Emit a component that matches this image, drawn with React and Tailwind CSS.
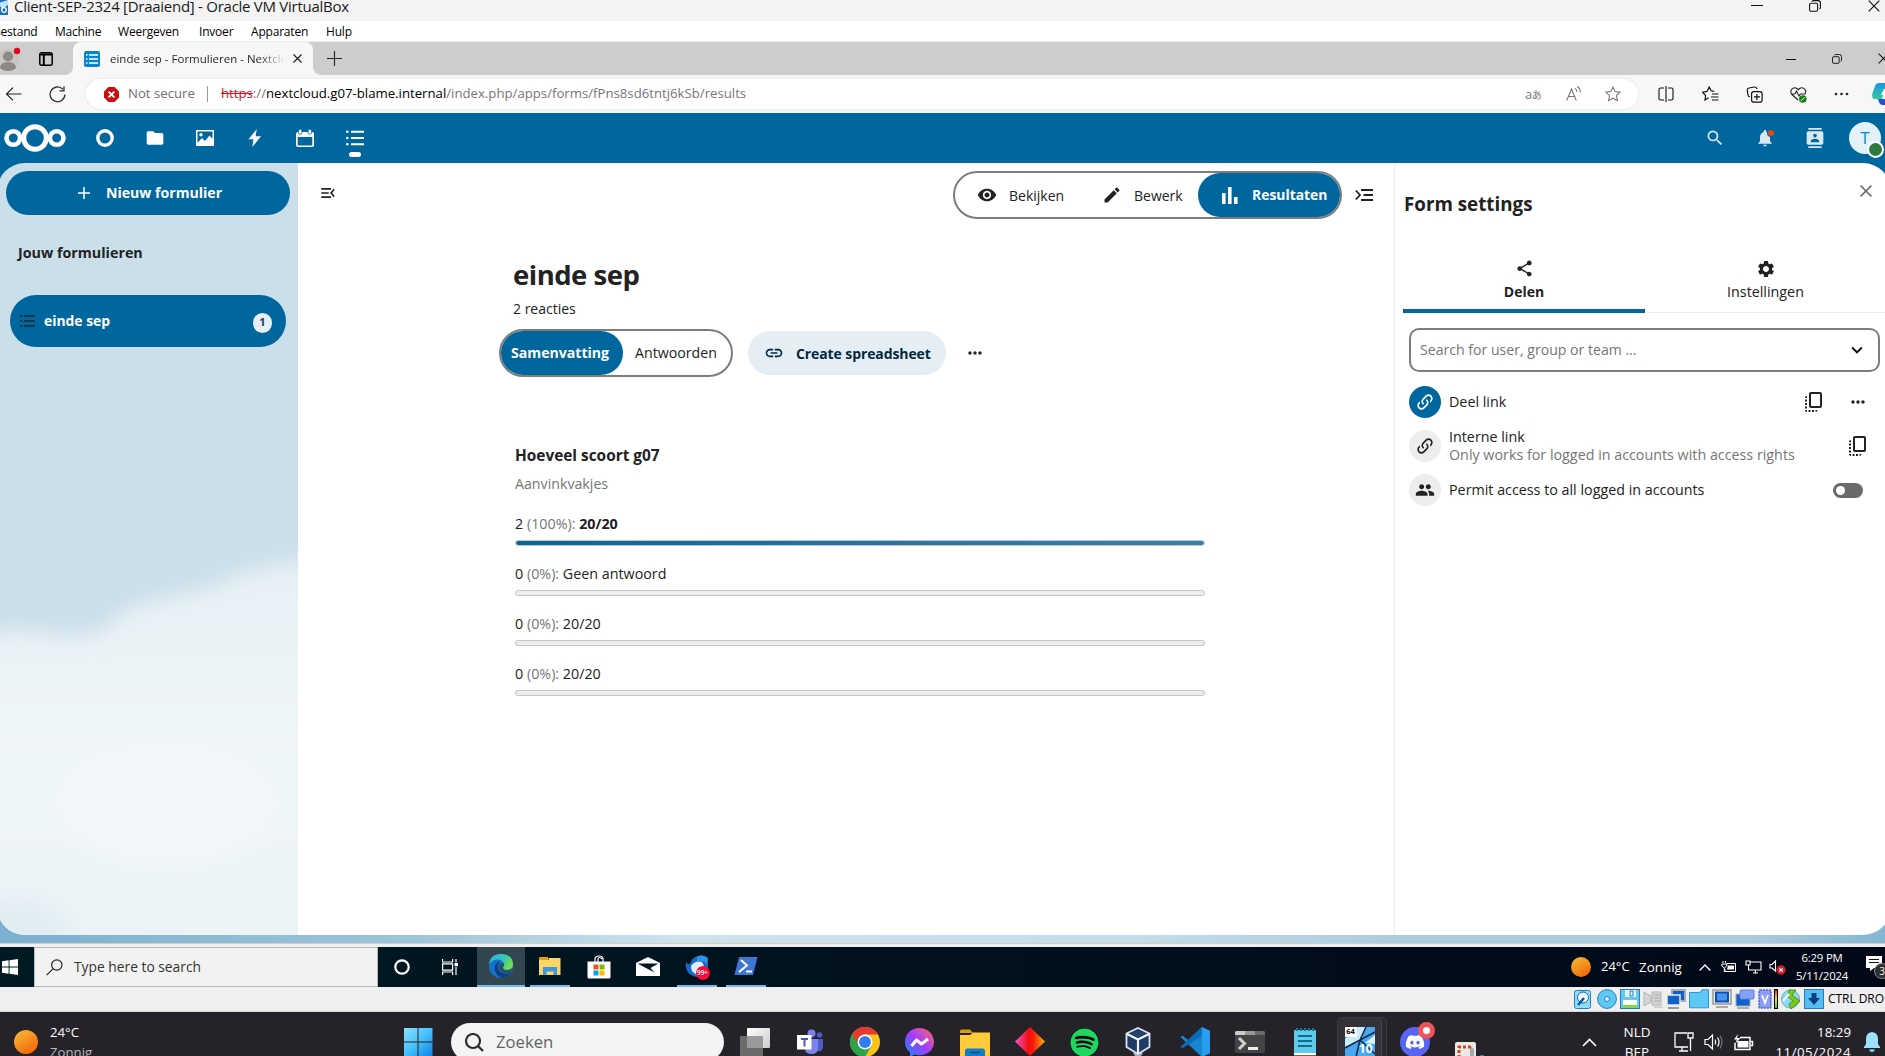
import React from "react";
import {
  MdVisibility, MdEdit, MdSettings, MdShare, MdMenuOpen, MdLink, MdMoreHoriz, MdGroup, MdExpandMore,
  MdSearch, MdCopyAll, MdNotifications, MdContacts, MdFolder,
} from "react-icons/md";
import { FaDiscord, FaSpotify } from "react-icons/fa";

const BLUE = "#00679e";

function Svg({ w = 24, h, box, children, className = "" }) {
  return (
    <svg width={w} height={h || w} viewBox={box || `0 0 ${w} ${h || w}`} fill="none" className={`shrink-0 ${className}`}>
      {children}
    </svg>
  );
}

function Minimize() {
  return <Svg w={12}><path d="M0 5.5h12" stroke="#111" /></Svg>;
}
function Restore({ w = 12 }) {
  return (
    <Svg w={w} box="0 0 12 12">
      <rect x=".6" y="3.2" width="8" height="8" rx="1.4" stroke="#111" strokeWidth="1.1" />
      <path d="M3 1.6Q3.4.6 4.6.6H9q2.4 0 2.4 2.4v4.4q0 1.2-1 1.6" stroke="#111" strokeWidth="1.1" />
    </Svg>
  );
}
function Cross({ w = 12 }) {
  return <Svg w={w} box="0 0 12 12"><path d="M.7.7l10.6 10.6M11.3.7L.7 11.3" stroke="#111" strokeWidth="1.2" /></Svg>;
}

function TitleBar() {
  return (
    <div className="flex h-[21px] items-start bg-[#f3f3f3]">
      <Svg w={8} h={16}>
        <rect x="-8" y="-2" width="16" height="17" fill="#1c6fc0" />
        <path d="M-2 3L8 0v5L2 9z" fill="#bfe3fa" />
        <circle cx="4" cy="10" r="2.3" stroke="#fff" strokeWidth="1.3" />
      </Svg>
      <span className="-mt-[4px] ml-[6px] w-[1730px] text-[15px] leading-[21px] tracking-[-0.27px] text-[#1a1a1a]">
        Client-SEP-2324 [Draaiend] - Oracle VM VirtualBox
      </span>
      <span className="ml-[7px] flex w-[58px]"><Minimize /></span>
      <span className="flex w-[59px]"><Restore w={12} /></span>
      <Cross w={12} />
    </div>
  );
}

function MenuBar() {
  return (
    <div className="flex h-[21px] items-center border-b border-[#ececec] bg-white pt-[2px] text-[12px] tracking-[-0.2px] text-black">
      <span className="-ml-[7px] w-[62px]">Bestand</span>
      <span className="w-[63px]">Machine</span>
      <span className="w-[81px]">Weergeven</span>
      <span className="w-[52px]">Invoer</span>
      <span className="w-[75px]">Apparaten</span>
      <span>Hulp</span>
    </div>
  );
}

function TabStrip() {
  return (
    <div className="flex h-[33px] items-stretch bg-[#cdcdcd]">
      <div className="w-[73px] shrink-0 bg-[#f7f7f7]">
        <div className="flex h-full items-center rounded-br-[8px] bg-[#cdcdcd]">
          <Svg w={22} h={26} className="mr-[17px]">
            <circle cx="8" cy="14" r="11" fill="#c9c6c2" />
            <circle cx="8" cy="10.500" r="5" fill="#8b8886" />
            <path d="M0 22q0-6 8-6t8 6q-3 3-8 3t-8-3z" fill="#8b8886" />
            <circle cx="17" cy="5" r="3.200" fill="#e00b1c" />
          </Svg>
          <Svg w={14}>
            <rect x=".8" y=".8" width="12.400" height="12.400" rx="2" stroke="#000" strokeWidth="1.500" />
            <path d="M1 2.500h12M4.800 3v10" stroke="#000" strokeWidth="2" />
          </Svg>
        </div>
      </div>
      <div className="flex w-[240px] shrink-0 items-center rounded-t-[8px] bg-[#f7f7f7]">
        <Svg w={16} className="ml-[11px]">
          <rect width="16" height="16" rx="2" fill="#0a84cc" />
          <path d="M2 4h1.500M5 4h9M2 8h1.500M5 8h9M2 12h1.500M5 12h9" stroke="#fff" strokeWidth="1.600" />
        </Svg>
        <div className="ml-[10px] w-[175px] overflow-hidden whitespace-nowrap bg-gradient-to-r from-[#222] from-85% to-transparent bg-clip-text text-[11.5px] text-transparent">
          einde sep - Formulieren - Nextcloud
        </div>
        <Svg w={9} className="ml-[8px]"><path d="M.5.5l8 8M8.500.5l-8 8" stroke="#222" strokeWidth="1.200" /></Svg>
      </div>
      <div className="w-[1470px] shrink-0 bg-[#f7f7f7]">
        <div className="flex h-full items-center rounded-bl-[8px] bg-[#cdcdcd] pl-[14px]">
          <Svg w={15}><path d="M7.500 0v15M0 7.500h15" stroke="#222" strokeWidth="1.100" /></Svg>
        </div>
      </div>
      <div className="ml-[3px] flex shrink-0 items-center">
        <span className="w-[46px]"><Svg w={10}><path d="M0 5.500h10" stroke="#111" /></Svg></span>
        <span className="w-[46px]"><Restore w={10} /></span>
        <Cross w={11} />
      </div>
    </div>
  );
}

function AddressBar() {
  return (
    <div className="flex h-[38px] items-center bg-[#f7f7f7]">
      <Svg w={17} h={14} className="ml-[5px]"><path d="M16.500 7H1.500M8 .6L1.500 7 8 13.400" stroke="#222" strokeWidth="1.200" /></Svg>
      <Svg w={17} className="ml-[27px]">
        <path d="M15.900 8.500a7.400 7.400 0 1 1-2-5.200M15 .3v4.500h-4.600" stroke="#333" strokeWidth="1.300" />
      </Svg>
      <div className="ml-[20px] flex h-[30px] w-[1552px] shrink-0 items-center rounded-full bg-white text-[13.2px] shadow-[0_0_3px_rgba(0,0,0,0.10)]">
        <Svg w={15} className="ml-[18px]">
          <path d="M4.400 0h6.200L15 4.400v6.200L10.600 15H4.400L0 10.600V4.400z" fill="#cb0e12" />
          <path d="M4.600 4.600l5.800 5.800M10.400 4.600l-5.800 5.800" stroke="#fff" strokeWidth="1.900" />
        </Svg>
        <span className="ml-[9px] w-[79px] shrink-0 text-[#6d6d6d]">Not secure</span>
        <span className="h-[16px] w-px bg-[#999]" />
        <span className="ml-[13px] w-[1304px] shrink-0 whitespace-nowrap text-[#767676]">
          <span className="text-[#c9151b] line-through">https</span>://<span className="text-black">nextcloud.g07-blame.internal</span>/index.php/apps/forms/fPns8sd6tntj6kSb/results
        </span>
        <span className="w-[41px] shrink-0 font-['Open_Sans','Noto_Sans_CJK_JP',sans-serif] text-[13px] leading-none tracking-[-0.5px] text-[#777]">
          a<span className="text-[10px]">あ</span>
        </span>
        <Svg w={16} className="mr-[23px]">
          <path d="M.7 14.500L5.500 3l4.800 11.500M2.300 10.500h6.400M9 2.500q2 1.200 2 3.500M11 .6q3.500 1.800 3.300 5.600" stroke="#777" strokeWidth="1.100" />
        </Svg>
        <Svg w={16} box="0 0 24 24"><path d="M12 1.500l3.200 6.900 7.500.9-5.500 5.200 1.400 7.500L12 18.300 5.400 22l1.400-7.500L1.300 9.300l7.500-.9z" stroke="#777" strokeWidth="1.600" /></Svg>
      </div>
      <div className="ml-[20px] flex shrink-0 items-center">
        <span className="w-[44px]"><Svg w={16}><path d="M6 2H2.500Q1 2 1 3.500v9Q1 14 2.500 14H6M10 2h3.500Q15 2 15 3.500v9q0 1.500-1.500 1.500H10M8 0v16" stroke="#111" strokeWidth="1.100" /></Svg></span>
        <span className="w-[44px]"><Svg w={17} h={16}><path d="M6.500 11.800L3 14l.6-4.500L.6 6.200 5 5.400 7.200 1l2 3.800 3 .6M10 8h6.500M9 11h7.500M10 14h6.500" stroke="#111" strokeWidth="1.200" /></Svg></span>
        <span className="w-[44px]"><Svg w={17} h={17}><path d="M11 3Q10.600.8 8.500 1L3 2Q1 2.500 1.200 4.400L2 9q.3 1.700 2 2" stroke="#111" strokeWidth="1.200" /><rect x="5.600" y="5.600" width="10.500" height="10.500" rx="2.200" stroke="#111" strokeWidth="1.200" /><path d="M10.900 8v6M8 10.900h6" stroke="#111" strokeWidth="1.200" /></Svg></span>
        <span className="w-[44px]"><Svg w={17} h={17}><path d="M8 14L2 8.500Q0 6 1.500 3.500 4 .5 7 2.500l1.300 1.200L9.600 2.500q3-2 5.400 1 1.500 2 0 4.500M1 8h4l1.500-3 2.500 5 1.500-2h5" stroke="#222" strokeWidth="1.100" /><circle cx="12.800" cy="13" r="3.800" fill="#1b7d1b" /><path d="M11 14.800l3.500-3.500" stroke="#fff" /></Svg></span>
        <span className="w-[38px]"><Svg w={15} h={4}><circle cx="2" cy="2" r="1.300" fill="#222" /><circle cx="7.500" cy="2" r="1.300" fill="#222" /><circle cx="13" cy="2" r="1.300" fill="#222" /></Svg></span>
        <Svg w={13} h={22}>
          <defs><linearGradient id="cop" x1="0" y1="0" x2="0" y2="1"><stop stopColor="#1597e8" /><stop offset="1" stopColor="#38c99a" /></linearGradient></defs>
          <path d="M7 0h6v5L10 16H3Q-1 16 .5 10L3 3Q4 0 7 0z" fill="url(#cop)" />
          <path d="M6 16h7v6h-3q-2 0-3-3z" fill="#2350cf" />
          <path d="M9 12l3-6 1 0v6z" fill="#fff" />
        </Svg>
      </div>
    </div>
  );
}

function CloudHeader() {
  const cell = "flex w-[50px] shrink-0 items-center justify-center text-white";
  return (
    <div className="flex h-[50px] items-center bg-[#00679e]">
      <div className="w-[80px] shrink-0 pl-[4px]">
        <Svg w={62} h={28}>
          <circle cx="31" cy="14" r="11.300" stroke="#fff" strokeWidth="5" />
          <circle cx="9.300" cy="14" r="6.800" stroke="#fff" strokeWidth="4.600" />
          <circle cx="52.700" cy="14" r="6.800" stroke="#fff" strokeWidth="4.600" />
        </Svg>
      </div>
      <div className={cell}><Svg w={18}><circle cx="9" cy="9" r="7.200" stroke="#fff" strokeWidth="3.400" /></Svg></div>
      <div className={cell}><MdFolder size={20} /></div>
      <div className={cell}>
        <Svg w={18} h={16}><path fillRule="evenodd" d="M0 0h18v16H0zM1.500 1.500v11.200L6 8l3 3 4.500-5.500 3 3.300V1.500z" fill="#fff" /><circle cx="5" cy="4.700" r="1.700" fill="#fff" /></Svg>
      </div>
      <div className={cell}><Svg w={14} h={18}><path d="M8.800 0L.5 10.300h5L4.300 18 13 7.300H7.600z" fill="#fff" /></Svg></div>
      <div className={cell}>
        <Svg w={18} h={18}><path fillRule="evenodd" d="M2 3h14q2 0 2 2v11q0 2-2 2H2q-2 0-2-2V5q0-2 2-2zm-.3 5v7.500q0 .9.900.9h12.800q.9 0 .9-.9V8z" fill="#fff" /><rect x="2.500" y=".3" width="3.400" height="5" rx="1.500" fill="#fff" stroke={BLUE} strokeWidth=".8" /><rect x="12.100" y=".3" width="3.400" height="5" rx="1.500" fill="#fff" stroke={BLUE} strokeWidth=".8" /></Svg>
      </div>
      <div className="flex h-full w-[50px] flex-col items-center pt-[17px]">
        <Svg w={18} h={16}>
          <path d="M5 1.800h13M5 8h13M5 14.200h13" stroke="#fff" strokeWidth="1.900" />
          <circle cx="1.300" cy="1.800" r="1.300" fill="#fff" /><circle cx="1.300" cy="8" r="1.300" fill="#fff" /><circle cx="1.300" cy="14.200" r="1.300" fill="#fff" />
        </Svg>
        <span className="mt-[6px] h-[5px] w-[12px] rounded-full bg-white" />
      </div>
      <div className="ml-auto flex w-[195px] shrink-0 items-center">
        <div className="flex w-[50px] justify-center text-[#d9e8f0]"><MdSearch size={20} /></div>
        <div className="relative flex w-[50px] justify-center text-[#d9e8f0]">
          <MdNotifications size={20} />
          <span className="absolute right-[16px] top-[2px] size-[6px] rounded-full bg-[#dc4a18] ring-1 ring-[#00679e]" />
        </div>
        <div className="flex w-[50px] justify-center text-[#d9e8f0]"><MdContacts size={20} /></div>
        <div className="relative ml-[9px] flex size-[32px] shrink-0 items-center justify-center rounded-full bg-[#e3f1f9] text-[17px] text-[#0c8bd2]">
          T
          <span className="absolute -bottom-[4px] -right-[3px] size-[17px] rounded-full border-[2px] border-white bg-[#2d7b41]" />
        </div>
      </div>
    </div>
  );
}

function Sidebar() {
  return (
    <div className="relative flex w-[301px] shrink-0 flex-col bg-[#cbdfea] pl-[3px]">
      <svg className="absolute inset-0" width="301" height="772" viewBox="0 0 301 772">
        <defs>
          <filter id="soft" x="-30%" y="-30%" width="160%" height="160%"><feGaussianBlur stdDeviation="10" /></filter>
          <linearGradient id="cloud" x1="0" y1="0" x2="0" y2="1">
            <stop offset="0" stopColor="#e6f0f5" /><stop offset=".4" stopColor="#eff5f8" /><stop offset="1" stopColor="#ebf3f7" />
          </linearGradient>
        </defs>
        <path d="M-40 478Q10 462 60 472 105 480 128 447 175 432 215 425 255 398 350 395V830H-40z" fill="url(#cloud)" filter="url(#soft)" />
        <ellipse cx="170" cy="640" rx="110" ry="60" fill="#f3f7fa" filter="url(#soft)" />
        <ellipse cx="15" cy="765" rx="60" ry="30" fill="#e2edf3" filter="url(#soft)" />
      </svg>
      <div className="relative">
        <div className="ml-[6px] mt-[8px] flex h-[44px] w-[284px] items-center rounded-full bg-[#00679e] text-white">
          <Svg w={12} className="ml-[72px]"><path d="M6 0v12M0 6h12" stroke="#fff" strokeWidth="1.500" /></Svg>
          <span className="ml-[16px] text-[14.1px] font-bold">Nieuw formulier</span>
        </div>
        <div className="ml-[18px] mt-[27px] text-[14.300px] font-bold leading-[22px] text-[#222]">Jouw formulieren</div>
        <div className="ml-[10px] mt-[31px] flex h-[52px] w-[276px] items-center rounded-full bg-[#00679e] text-white">
          <Svg w={15} h={12} className="ml-[10px] -mt-[1px]">
            <path d="M4 1.200h11M4 6h11M4 10.800h11M0 1.200h2.300M0 6h2.300M0 10.800h2.300" stroke="#1b2d3a" strokeWidth="1.700" />
          </Svg>
          <span className="ml-[9px] text-[13.900px] font-bold">einde sep</span>
          <span className="ml-auto mr-[14px] mt-[3px] flex h-[20px] w-[19px] items-center justify-center rounded-full bg-[#e5eff5] text-[11px] font-bold text-[#15405a]">1</span>
        </div>
      </div>
    </div>
  );
}

const results = [
  { count: 2, pct: 100, label: "20/20", top: true },
  { count: 0, pct: 0, label: "Geen antwoord" },
  { count: 0, pct: 0, label: "20/20" },
  { count: 0, pct: 0, label: "20/20" },
];

function Main() {
  return (
    <div className="flex w-[1096px] shrink-0 flex-col bg-white text-[#222]">
      <div className="flex h-[64px] items-start">
        <MdMenuOpen size={20} className="ml-[20px] mt-[20px] scale-x-90" />
        <div className="ml-[615px] mt-[8px] flex h-[48px] w-[389px] items-center rounded-full border-2 border-[#7d7d7d] text-[14px]">
          <MdVisibility size={20} className="ml-[22px]" />
          <span className="ml-[12px] w-[93px]">Bekijken</span>
          <MdEdit size={20} />
          <span className="ml-[12px] w-[64px]">Bewerk</span>
          <div className="flex h-[44px] flex-1 items-center rounded-full bg-[#00679e] font-bold text-white">
            <Svg w={16} h={17} className="ml-[24px]"><path d="M0 6h3.600v11H0zM6 0h3.600v17H6zM12 10h3.600v7H12z" fill="#fff" /></Svg>
            <span className="ml-[14px] text-[13.900px]">Resultaten</span>
          </div>
        </div>
        <Svg w={18} h={12} className="ml-[13px] mt-[26px]">
          <path d="M6 1h12M8.500 6H18M6 11h12" stroke="#222" strokeWidth="2" /><path d="M.8 1.500L5 6 .8 10.500" stroke="#222" strokeWidth="1.800" />
        </Svg>
      </div>
      <h1 className="ml-[215px] mt-[28px] text-[27.500px] font-bold leading-[40px] tracking-[-0.5px]">einde sep</h1>
      <div className="ml-[215px] mt-[3px] text-[14px] leading-[22px]">2 reacties</div>
      <div className="ml-[201px] mt-[9px] flex items-center">
        <div className="flex h-[48px] w-[234px] items-center rounded-full border-2 border-[#7d7d7d] text-[14px]">
          <div className="flex h-[44px] w-[122px] items-center justify-center rounded-full bg-[#00679e] pr-[4px] text-[14.200px] font-bold tracking-[-0.05px] text-white">Samenvatting</div>
          <span className="ml-[12px] text-[14.200px]">Antwoorden</span>
        </div>
        <div className="ml-[15px] flex h-[44px] w-[198px] items-center rounded-full bg-[#e5eef5] text-[#00293f]">
          <MdLink size={20} className="ml-[16px]" />
          <span className="ml-[12px] whitespace-nowrap text-[14px] font-bold tracking-[-0.1px]">Create spreadsheet</span>
        </div>
        <MdMoreHoriz size={20} className="ml-[19px]" />
      </div>
      <div className="ml-[217px] mt-[67px] text-[15.400px] font-bold leading-[24px]">Hoeveel scoort g07</div>
      <div className="ml-[217px] mt-[5px] text-[14.200px] leading-[22px] text-[#767676]">Aanvinkvakjes</div>
      <div className="ml-[217px] mt-[18px] flex w-[690px] flex-col text-[14.300px]">
        {results.map((r, i) => (
          <div key={i} className="h-[50px]">
            <div className="leading-[22px]">
              {r.count} <span className="text-[#767676]">({r.pct}%):</span>{" "}
              <span className={r.top ? "font-bold" : ""}>{r.label}</span>
            </div>
            <div className="mt-[5px] h-[6px] w-[690px] overflow-hidden rounded-[3px] border border-[#c6c6c6] bg-[#ededed]">
              <div className="h-full rounded-[2px] bg-gradient-to-r from-[#00679e] to-[#3480b4]" style={{ width: `${r.pct}%` }} />
            </div>
          </div>
        ))}
      </div>
    </div>
  );
}

function LinkVariant() {
  return (
    <svg width="20" height="20" viewBox="0 0 24 24" fill="currentColor">
      <path d="M10.59,13.41C11,13.8 11,14.44 10.59,14.83C10.2,15.22 9.56,15.22 9.17,14.83C7.22,12.88 7.22,9.71 9.17,7.76V7.76L12.71,4.22C14.66,2.27 17.83,2.27 19.78,4.22C21.73,6.17 21.73,9.34 19.78,11.29L18.29,12.78C18.3,11.96 18.17,11.14 17.89,10.36L18.36,9.88C19.54,8.71 19.54,6.81 18.36,5.64C17.19,4.46 15.29,4.46 14.12,5.64L10.59,9.17C9.41,10.34 9.41,12.24 10.59,13.41M13.41,9.17C13.8,8.78 14.44,8.78 14.83,9.17C16.78,11.12 16.78,14.29 14.83,16.24V16.24L11.29,19.78C9.34,21.73 6.17,21.73 4.22,19.78C2.27,17.83 2.27,14.66 4.22,12.71L5.71,11.22C5.7,12.04 5.83,12.86 6.11,13.65L5.64,14.12C4.46,15.29 4.46,17.19 5.64,18.36C6.81,19.54 8.71,19.54 9.88,18.36L13.41,14.83C14.59,13.66 14.59,11.76 13.41,10.59C13,10.2 13,9.56 13.41,9.17Z" />
    </svg>
  );
}

function SettingsPanel() {
  const circle = "flex size-[32px] shrink-0 items-center justify-center rounded-full";
  return (
    <div className="flex w-[497px] shrink-0 flex-col border-l border-[#ededed] bg-white text-[14.300px] text-[#222]">
      <div className="flex h-[84px] items-start">
        <span className="ml-[9px] mt-[26px] w-[456px] text-[18.800px] font-bold leading-[30px]">Form settings</span>
        <Svg w={12} className="mt-[22px]"><path d="M.6.6l10.800 10.800M11.400.6L.6 11.400" stroke="#6b6b6b" strokeWidth="1.500" /></Svg>
      </div>
      <div className="ml-[8px] flex h-[66px] border-b border-[#ededed]">
        <div className="flex h-[66px] w-[242px] flex-col items-center border-b-4 border-[#00679e] pt-[12px] text-[14px] font-bold">
          <MdShare size={19} />
          <span className="mt-[4px] leading-[20px]">Delen</span>
        </div>
        <div className="flex w-[241px] flex-col items-center pt-[12px]">
          <MdSettings size={20} />
          <span className="mt-[3px] leading-[20px]">Instellingen</span>
        </div>
      </div>
      <div className="ml-[14px] mt-[15px] flex h-[44px] w-[471px] items-center rounded-[10px] border-2 border-[#7d7d7d] pl-[9px] text-[#767676]">
        <span className="text-[14.100px]">Search for user, group or team …</span>
        <MdExpandMore size={22} className="ml-auto mr-[10px] text-[#111]" />
      </div>
      <div className="ml-[14px] mt-[8px] flex h-[44px] items-center">
        <div className={`${circle} bg-[#00679e] text-white`}><LinkVariant /></div>
        <span className="ml-[8px] w-[353px]">Deel link</span>
        <MdCopyAll size={24} />
        <MdMoreHoriz size={20} className="ml-[22px]" />
      </div>
      <div className="ml-[14px] flex h-[44px] items-center">
        <div className={`${circle} bg-[#ededed]`}><LinkVariant /></div>
        <div className="ml-[8px] w-[397px] leading-[18px]">
          <div>Interne link</div>
          <div className="whitespace-nowrap text-[#767676]">Only works for logged in accounts with access rights</div>
        </div>
        <MdCopyAll size={24} />
      </div>
      <div className="ml-[14px] flex h-[44px] items-center">
        <div className={`${circle} bg-[#ededed]`}><MdGroup size={20} /></div>
        <span className="ml-[8px] w-[384px]">Permit access to all logged in accounts</span>
        <span className="flex h-[15px] w-[30px] items-center rounded-full bg-[#6b6b6b] pl-[3px]"><span className="size-[9px] rounded-full bg-white" /></span>
      </div>
    </div>
  );
}

function Sun({ w }) {
  return (
    <Svg w={w} box="0 0 24 24">
      <defs><linearGradient id="sun" x1="0" y1="0" x2=".6" y2="1"><stop stopColor="#f4c038" /><stop offset="1" stopColor="#f3690c" /></linearGradient></defs>
      <circle cx="12" cy="12" r="12" fill="url(#sun)" />
    </Svg>
  );
}

function GuestTaskbar() {
  const cell = "flex h-full w-[49px] shrink-0 items-center justify-center";
  return (
    <div className="flex h-[40px] items-center bg-gradient-to-r from-[#001a24] to-[#010817] text-white">
      <div className="w-[34px] shrink-0 pl-[2px]">
        <Svg w={16}><path d="M0 2.200L6.600 1.300V7.500H0zM7.500 1.200L16 0v7.500H7.500zM0 8.500h6.600v6.200L0 13.800zM7.500 8.500H16V16l-8.500-1.200z" fill="#fff" /></Svg>
      </div>
      <div className="flex h-full w-[344px] shrink-0 items-center border border-[#b9b9b9] bg-[#f2f2f2] text-[#333]">
        <Svg w={17} className="ml-[11px]"><circle cx="10.800" cy="6" r="5.200" stroke="#222" strokeWidth="1.200" /><path d="M7 9.800L.6 16.200" stroke="#222" strokeWidth="1.200" /></Svg>
        <span className="ml-[11px] text-[13.800px]">Type here to search</span>
      </div>
      <div className="flex w-[48px] shrink-0 justify-center"><Svg w={16}><circle cx="8" cy="8" r="6.700" stroke="#fff" strokeWidth="2.200" /></Svg></div>
      <div className="flex w-[51px] shrink-0 justify-center pr-[3px]">
        <Svg w={16} h={16}><path d="M.6 0v3h10V0M.6 16v-3h10v3M.6 4.800h10v6.400H.6zM14 0v3.500M14 8v8" stroke="#fff" strokeWidth="1.200" /><rect x="12.500" y="4" width="3.500" height="3.200" fill="#fff" /></Svg>
      </div>
      <div className="flex h-full w-[48px] shrink-0 items-center justify-center border-b-2 border-[#76b9ed] bg-[#334650]">
        <Svg w={24}>
          <defs>
            <linearGradient id="edgeT" x1="0" y1="0" x2="1" y2=".5"><stop stopColor="#2fb1ea" /><stop offset=".6" stopColor="#34c7b4" /><stop offset="1" stopColor="#6fe04f" /></linearGradient>
          </defs>
          <circle cx="12" cy="12" r="12" fill="#1473c9" />
          <path d="M0 11Q1 0 12 0q12 .5 12 10.500 0 5.500-6 5.500-4 0-4-2.500 1.500-1.500 1-4Q13 5 8 5.500 2 6 0 11z" fill="url(#edgeT)" />
          <path d="M8.500 13q0-3 3-5.500Q6 8 5.600 14q0 7 7.400 10 6-.5 9-5.500-4 2-8 .5-5-1.500-5.500-6z" fill="#0d3f85" />
          <path d="M15 9.500q1 2-1 4 0 2.500 4 2.500 4 0 5.500-2.500-1 4-1.700 5-3 1.300-7.800 0Q9 16 9.500 12 11 8 15 9.500z" fill="#334650" opacity=".75" />
        </Svg>
      </div>
      <div className={cell}>
        <div className="flex h-full w-[40px] items-center justify-center border-b-2 border-[#76b9ed]">
          <Svg w={22} h={18}><path d="M0 1Q0 0 1 0h8v3H0z" fill="#e8a200" /><path d="M0 3h9.500V1H21.500v17H0z" fill="#fdd566" /><path d="M4 10h14v8h-3.500v-3.500h-7V18H4z" fill="#3a99dd" /></Svg>
        </div>
      </div>
      <div className={cell}>
        <Svg w={24} h={24}><path d="M8 7V3.500Q8.500 1 12 1t4 2.500V7M11 7V4q1-3 4 0" stroke="#fff" strokeWidth="1.200" /><path d="M.5 6.500h23V22q0 1.500-1.500 1.500H2Q.5 23.500.5 22z" fill="#fff" /><path d="M6.500 9.500h5v5h-5z" fill="#f25022" /><path d="M12.500 9.500h5v5h-5z" fill="#7fba00" /><path d="M6.500 15.500h5v5h-5z" fill="#00a4ef" /><path d="M12.500 15.500h5v5h-5z" fill="#ffb900" /></Svg>
      </div>
      <div className={cell}>
        <Svg w={24} h={20}><path d="M0 6L12 0l12 6v13H0z" fill="#fff" /><path d="M1.500 6.500H22.500L14.500 11l4 4.500z" fill="#001822" /></Svg>
      </div>
      <div className={cell}>
        <div className="relative flex h-full w-[40px] items-center justify-center border-b-2 border-[#76b9ed]">
          <Svg w={24}><path d="M1 8q2 3 4 2Q7 2 17 1q7 3 6 12-2 10-12 10Q-1 20 1 8z" fill="#1769c4" /><path d="M6 12q4-6 11-4l3 6-6 7Q6 20 6 12z" fill="#dceefb" /><path d="M12 3q6-3 11 1l-1 6q-4-4-10-3z" fill="#2f93ee" /></Svg>
          <span className="absolute bottom-[5px] right-[7px] flex size-[14px] items-center justify-center rounded-full bg-[#fb0a3a] text-[6.500px] font-semibold">99+</span>
        </div>
      </div>
      <div className={cell}>
        <div className="flex h-full w-[40px] items-center justify-center border-b-2 border-[#76b9ed]">
          <Svg w={24} h={18}><path d="M5 0h18.500L19 18H.5z" fill="#3d75d2" /><path d="M7 3l6 5.500L5 15M12 14.500h6" stroke="#fff" strokeWidth="2" /></Svg>
        </div>
      </div>
      <div className="ml-auto flex h-full w-[314px] shrink-0 items-center">
        <Sun w={20} />
        <span className="ml-[10px] w-[38px] shrink-0 whitespace-nowrap text-[13px]">24°C</span>
        <span className="w-[60px] shrink-0 text-[13.400px]">Zonnig</span>
        <Svg w={12} h={7}><path d="M.6 6.500L6 1l5.400 5.500" stroke="#fff" strokeWidth="1.300" /></Svg>
        <Svg w={16} h={12} className="ml-[10px]"><path d="M5.500 2.500h9v8H4V8M2 0v2M4.500 0v2M.8 3h5v2L3.300 7 .8 5zM3.300 7v4" stroke="#fff" /><path d="M7 4.500h6v4H6z" fill="#fff" /></Svg>
        <Svg w={17} h={14} className="ml-[8px]"><path d="M5 2h11v8H3.500V5M1 1h4v4H1zM8 13h5M10.500 10v3" stroke="#fff" strokeWidth="1.100" /></Svg>
        <Svg w={17} h={15} className="ml-[7px]"><path d="M1 4.500h2L6.500 1v10L3 8H1z" stroke="#fff" strokeWidth="1.100" /><circle cx="12" cy="10" r="4.700" fill="#d5202b" /><path d="M10.300 8.300l3.400 3.400M13.700 8.300l-3.400 3.400" stroke="#fff" strokeWidth="1.200" /></Svg>
        <div className="ml-[8px] w-[56px] shrink-0 text-center text-[11.400px] leading-[18px] tracking-[-0.2px]">
          <div>6:29 PM</div>
          <div className="whitespace-nowrap">5/11/2024</div>
        </div>
        <div className="relative ml-[16px] h-[24px] w-[20px] shrink-0">
          <Svg w={17} h={17}><path d="M0 1h16v12H8l-4 3v-3H0z" fill="#fff" /><path d="M3 4.500h10M3 7.500h10" stroke="#07121f" strokeWidth="1.200" /></Svg>
          <span className="absolute left-[8px] top-[8px] flex size-[16px] items-center justify-center rounded-full border border-[#888] bg-[#2d2d2d] text-[10px]">3</span>
        </div>
      </div>
    </div>
  );
}

function StatusBar() {
  const outline = "#2a7cc0";
  const cell = "flex w-[23px] shrink-0";
  return (
    <div className="flex h-[25px] items-center border-b border-[#d8d8d8] bg-[#efefef]">
      <div className="ml-auto flex w-[311px] shrink-0 items-center">
        <div className={cell}><Svg w={17} h={19}><rect x=".5" y=".5" width="16" height="18" rx="2" fill="#8fdcf8" stroke={outline} /><circle cx="9" cy="7.500" r="5.500" fill="#eef9ff" stroke="#1563a8" /><path d="M10 8L4 15" stroke="#12559a" strokeWidth="2.500" /></Svg></div>
        <div className={cell}><Svg w={20}><circle cx="10" cy="10" r="9.400" fill="#5ccaf5" stroke={outline} /><circle cx="10" cy="10" r="2.500" fill="#e8f8ff" stroke={outline} /></Svg></div>
        <div className={cell}><Svg w={20}><rect x=".5" y=".5" width="19" height="19" fill="#62c9f3" stroke={outline} /><path d="M5 1h11v7H5z" fill="#dff4fd" /><path d="M10 2h3v5h-3z" stroke={outline} /><path d="M3 11h14v5H3z" fill="#fff" /><path d="M3 16h14v3H3z" fill="#7fdb37" /></Svg></div>
        <div className={cell}><Svg w={20}><path d="M1 3l7 4v6l-7 4zM9 3h9v13H9zM11 18h9" fill="#d5d5d5" stroke="#b5b5b5" /><path d="M11 6h6M11 9h6M11 12h6" stroke="#aaa" /></Svg></div>
        <div className={cell}><Svg w={20}><rect x="6" y="1" width="13" height="11" fill="#0d61cb" stroke="#aaa" strokeWidth="2" /><rect x="1" y="6" width="13" height="10" fill="#0d61cb" stroke="#e9e9e9" strokeWidth="1.500" /><path d="M2 19h11" stroke="#999" strokeWidth="2" /></Svg></div>
        <div className={cell}><Svg w={20}><path d="M.5 3.500H11L13 .8h6.500v18H.5z" fill="#5cc8f5" stroke="#3496cf" /></Svg></div>
        <div className={cell}><Svg w={20}><rect x="1" y="1" width="18" height="14" fill="#eee" stroke="#999" strokeWidth="1.500" /><rect x="4" y="3.500" width="12" height="9" fill="#4794ec" stroke="#0b50b5" strokeWidth="2" /><path d="M4 18h12" stroke="#aaa" strokeWidth="2" /></Svg></div>
        <div className={cell}><Svg w={20}><rect x="1" y="5" width="14" height="12" fill="#0d61cb" stroke="#aaa" /><rect x="5" y="1" width="14" height="9" rx="1" fill="#86a2f5" stroke="#5f7ed8" /><path d="M2 19h12" stroke="#999" strokeWidth="1.500" /></Svg></div>
        <div className="flex w-[16px] shrink-0"><Svg w={14} h={20}><rect x="1" y="1" width="12" height="18" rx="1" fill="#8b9df4" stroke="#5165cd" strokeWidth="1.500" strokeDasharray="2 1" /><path d="M4 6l3 8 3-8" stroke="#fff" strokeWidth="1.800" /></Svg></div>
        <span className="mr-[3px] h-[20px] w-[4px] shrink-0 border border-black bg-gradient-to-b from-red-600 via-yellow-300 to-green-500" />
        <div className={cell}><Svg w={20}><circle cx="9.500" cy="10" r="9" fill="#8ed8f5" stroke="#6daac6" /><path d="M8 1h7l-4 5 8 6-9 8-2-5 4-3-5-4z" fill="#78c81e" stroke="#4b9a10" /><path d="M2 12l6-7" stroke="#e9f8ff" strokeWidth="2.500" /></Svg></div>
        <div className="flex w-[24px] shrink-0"><Svg w={20}><rect x=".5" y=".5" width="19" height="19" fill="#55bdf2" stroke={outline} /><path d="M7.500 4h5v5H16l-6 7-6-7h3.500z" fill="#0b3f80" /></Svg></div>
        <span className="w-[57px] shrink-0 overflow-hidden whitespace-nowrap text-[12px] tracking-[-0.05px] text-black">CTRL DRO</span>
      </div>
    </div>
  );
}

function HostTaskbar() {
  const cell = "flex w-[55px] shrink-0 items-center justify-center";
  return (
    <div className="flex h-[60px] items-center bg-[#252229] text-white">
      <div className="flex w-[403px] shrink-0 items-center pl-[14px]">
        <Sun w={24} />
        <div className="ml-[12px] text-[13.200px] leading-[20px]">
          <div>24°C</div>
          <div className="text-[#b9b8ba]">Zonnig</div>
        </div>
      </div>
      <div className="w-[48px] shrink-0">
        <Svg w={30}>
          <defs><linearGradient id="win" x1="0" y1="0" x2="1" y2="1"><stop stopColor="#8fdfff" /><stop offset=".5" stopColor="#45c1fb" /><stop offset="1" stopColor="#0a84e8" /></linearGradient></defs>
          <path d="M1 1h13.500v13.500H1zM15.500 1H29.500v13.500h-14zM1 15.500h13.500V29H1zM15.500 15.500h14V29h-14z" fill="url(#win)" />
        </Svg>
      </div>
      <div className="flex h-[38px] w-[273px] shrink-0 items-center rounded-full bg-[#f3f3f3] text-[#636363]">
        <Svg w={19} className="ml-[14px]"><circle cx="8" cy="8" r="7" stroke="#2a2a2a" strokeWidth="2.100" /><path d="M13 13l5 5" stroke="#2a2a2a" strokeWidth="2.300" /></Svg>
        <span className="ml-[12px] text-[16.700px]">Zoeken</span>
      </div>
      <div className={`${cell} ml-[3px]`}>
        <Svg w={30}>
          <defs><linearGradient id="tv" x1="0" y1="0" x2="1" y2="1"><stop stopColor="#fff" /><stop offset="1" stopColor="#ccc" /></linearGradient></defs>
          <rect x="0" y="9" width="23" height="20" rx="1" fill="#6b6b6c" /><rect x="7" y="1" width="23" height="20" rx="1" fill="url(#tv)" /><path d="M7 9h16v12H7z" fill="#9a9a9b" />
        </Svg>
      </div>
      <div className={cell}>
        <Svg w={28} h={26}>
          <circle cx="15.500" cy="4.500" r="4" fill="#7b83eb" /><circle cx="23.500" cy="6" r="2.800" fill="#5059c9" />
          <path d="M18 10h9v8q0 5-6 4z" fill="#5059c9" /><path d="M9 10h13v9q0 6-6.500 6T9 20z" fill="#7b83eb" />
          <rect x="1" y="6" width="14.500" height="14.500" fill="#fff" /><path d="M5 10h7M8.500 10v7.500" stroke="#4b53bc" strokeWidth="2" />
        </Svg>
      </div>
      <div className={cell}>
        <Svg w={30} box="0 0 48 48">
          <circle cx="24" cy="24" r="24" fill="#fbc116" />
          <path d="M3.200 12A24 24 0 0 0 24 48l10.400-18L24 24V12z" fill="#2ba24c" />
          <path d="M3.200 12A24 24 0 0 1 44.800 12H24a12 12 0 0 0-10.400 18z" fill="#e33b2e" />
          <path d="M3.200 12A24 24 0 0 0 2 33l14 0-2.400-3z" fill="#2ba24c" />
          <circle cx="24" cy="24" r="12" fill="#fff" /><circle cx="24" cy="24" r="9.500" fill="#2f7df0" />
        </Svg>
      </div>
      <div className={cell}>
        <Svg w={29}>
          <defs><linearGradient id="msg" x1="1" y1="0" x2="0" y2="1"><stop stopColor="#ff6a63" /><stop offset=".5" stopColor="#a23bff" /><stop offset="1" stopColor="#0a8cff" /></linearGradient></defs>
          <path d="M14.500 0C6 0 0 6 0 14q0 6.500 5 10.500V29l4.500-2.500q2.500.8 5 .8C23 27.300 29 21.500 29 14S23 0 14.500 0z" fill="url(#msg)" />
          <path d="M6.500 18l5-6 5 4 6.500-5" stroke="#fff" strokeWidth="3" strokeLinejoin="round" />
        </Svg>
      </div>
      <div className={cell}>
        <Svg w={30} h={28}>
          <path d="M0 3q0-1.500 1.500-1.500H10L13 5H0z" fill="#dc9c05" /><path d="M0 7h10l3-2.500h17V28H0z" fill="#ffcb3a" />
          <path d="M5 28v-5q0-2.500 2.500-2.500h15Q25 20.500 25 23v5z" fill="#0f7cc8" /><path d="M10 24.500h10" stroke="#08508c" strokeWidth="1.500" />
        </Svg>
      </div>
      <div className={cell}>
        <Svg w={30}>
          <defs><linearGradient id="dia"><stop stopColor="#f257c5" /><stop offset=".45" stopColor="#f50d12" /><stop offset=".6" stopColor="#f51a0a" /><stop offset="1" stopColor="#f7b705" /></linearGradient></defs>
          <path d="M15 0l15 14.500L15 29 0 14.500z" fill="url(#dia)" />
        </Svg>
      </div>
      <div className={cell}><span className="flex rounded-full bg-black"><FaSpotify size={29} color="#1ed760" /></span></div>
      <div className={cell}>
        <Svg w={26} h={30} className="-ml-[4px]">
          <path d="M8 26q5-3 10 0l-2 3h-6z" fill="#9fabc4" />
          <path d="M13 1l11.500 5.500V20L13 27 1.500 20V6.500z" fill="#1f3c66" stroke="#dbe3ef" strokeWidth="1.800" />
          <path d="M2 7l11 5.500L24 7M13 12.500V27" stroke="#eef2f8" strokeWidth="2.200" />
          <path d="M6 7l7-3 7 3-7 3z" fill="#27436e" />
        </Svg>
      </div>
      <div className={cell}>
        <Svg w={30} box="0 0 24 24">
          <path d="M17.500 0L6.500 10.300 2.200 7 .3 8v0L17.500 24l1-7z" fill="#1586cf" />
          <path d="M2.200 17L.3 16 17.500 0v7L6.500 14z" fill="#0a6cb4" /><path d="M17.500 0L24 3v18l-6.500 3z" fill="#2a9df0" />
        </Svg>
      </div>
      <div className={cell}>
        <Svg w={30} h={22}>
          <rect width="30" height="22" rx="1.500" fill="#444445" /><path d="M0 4V1.500Q0 0 1.500 0H10v4z" fill="#ccc" /><path d="M10 0h10v4H10z" fill="#9a9a9a" /><path d="M20 0h8.500Q30 0 30 1.500V4H20z" fill="#6b6b6b" />
          <path d="M4 7l5.500 5.500L4 18" stroke="#d0d0d0" strokeWidth="3" /><path d="M13 17.500h10" stroke="#eee" strokeWidth="3" />
        </Svg>
      </div>
      <div className={cell}>
        <Svg w={24} h={30}>
          <rect x="1" y="3" width="22" height="25" rx="1" fill="#5fcbe8" /><path d="M1 26h22v2H1z" fill="#fff" /><path d="M1 28h22v2H1z" fill="#a4542a" />
          <path d="M4 1v3M8 1v3M12 1v3M16 1v3M20 1v3" stroke="#117a9b" strokeWidth="2" /><path d="M5 9h14M5 14h14M5 19h14" stroke="#0c6d91" strokeWidth="1.800" />
        </Svg>
      </div>
      <div className={cell}>
        <div className="ml-[5px] flex h-[50px] w-[50px] items-center rounded-[5px] border border-[#3d3a41] bg-[#2b282f]">
          <div className="flex h-[48px] w-[44px] items-center justify-center rounded-[5px] border-r border-[#4a474e] bg-[#343138]">
            <div className="relative size-[30px] overflow-hidden bg-[#2b8fe0]">
              <Svg w={30}><path d="M0 0h30v30H0z" fill="#4aa9ee" /><path d="M13 0h8l-5 14L0 20v-8z" fill="#c9ebfb" /><path d="M20 16l10-8v9z" fill="#d9f2fd" /><path d="M21 0l-6 13L0 21M15 13l15-8M15 13l-4 17M15 13l15 14" stroke="#102c4c" strokeWidth="1.600" /></Svg>
              <span className="absolute left-0 top-0 flex h-[10px] w-[12px] items-center justify-center bg-white text-[7.500px] font-bold text-black">64</span>
              <span className="absolute bottom-[1px] right-[2px] text-[12px] font-bold leading-[14px] text-white">10</span>
            </div>
          </div>
        </div>
      </div>
      <div className={cell}>
        <div className="relative flex size-[30px] items-center justify-center rounded-full bg-[#5865f2]">
          <FaDiscord size={20} color="#fff" />
          <span className="absolute -right-[5px] -top-[5px] flex size-[17px] items-center justify-center rounded-full bg-[#f1535a]"><span className="size-[7px] rounded-full bg-white" /></span>
        </div>
      </div>
      <div className="w-[140px] shrink-0 pl-[12px] pt-[25px]">
        <Svg w={32} h={26}>
          <rect x="1" width="21" height="26" rx="2" fill="#e9e9e9" /><path d="M16 4l4 3v19h-4z" fill="#a9a9a9" /><path d="M5 26V5h12" stroke="#d24613" strokeWidth="3" strokeDasharray="3 2" /><circle cx="28" cy="16" r="3" fill="#219cd0" />
        </Svg>
      </div>
      <div className="flex shrink-0 items-center">
        <Svg w={15} h={9}><path d="M1 8l6.500-6.500L14 8" stroke="#fff" strokeWidth="1.600" /></Svg>
        <div className="ml-[21px] w-[38px] text-center text-[13.500px] leading-[20px]"><div>NLD</div><div>BEP</div></div>
        <Svg w={20} h={20} className="ml-[18px]"><path d="M13 1H1v14h13M5 19h9M8 15v4" stroke="#fff" strokeWidth="1.300" /><path d="M14 1h5v5h-5zM16.500 6v13" stroke="#fff" strokeWidth="1.300" /></Svg>
        <Svg w={20} h={16} className="ml-[10px]"><path d="M1 5.500h3L8.500 1v14L4 10.500H1z" stroke="#fff" strokeWidth="1.200" /><path d="M11 5.500q1.500 2.500 0 5M13.500 3.500q3 4.500 0 9" stroke="#fff" strokeWidth="1.200" /><path d="M16 1.500q4 6.500 0 13" stroke="#77757a" strokeWidth="1.200" /></Svg>
        <Svg w={21} h={17} className="ml-[9px]"><path d="M7 3.500h10v12H2V9M18 7.500h1.500v4H18" stroke="#fff" strokeWidth="1.500" /><path d="M4.500 7h11v6.500h-11z" fill="#fff" /><path d="M5 0L1 5.500h3L2 10l5.500-6H4z" fill="#fff" /></Svg>
        <div className="ml-[16px] w-[81px] text-right text-[13.300px] leading-[20px]"><div>18:29</div><div className="whitespace-nowrap tracking-[0.5px]">11/05/2024</div></div>
        <Svg w={16} h={20} className="ml-[13px]"><path d="M8 0Q2 .5 2 7v5L0 15v1h16v-1l-2-3V7Q14 .5 8 0zM5 17.500h6Q10 20 8 20t-3-2.500z" fill="#9be3fc" /></Svg>
      </div>
    </div>
  );
}

export default function App() {
  return (
    <div className="flex h-[1056px] w-[1885px] flex-col overflow-hidden bg-white font-['Open_Sans','Noto_Sans',sans-serif] *:shrink-0">
      <TitleBar />
      <MenuBar />
      <TabStrip />
      <AddressBar />
      <CloudHeader />
      <div className="h-[780px] overflow-hidden bg-[linear-gradient(to_bottom,#00679e_0%,#00679e_50%,transparent_50%),linear-gradient(to_right,#7bb0d0_0%,#9dc5da_22%,#cfe2ec_36%,#c5dce9_60%,#a9cce0_75%,#a9cce0_93%,#85b5d2_100%)]">
        <div className="-ml-[3px] flex h-[772px] w-[1894px] overflow-hidden rounded-[28px]">
          <Sidebar />
          <Main />
          <SettingsPanel />
        </div>
      </div>
      <div className="h-[4px] border-t border-[#cfcfcf] bg-[#efefee]" />
      <GuestTaskbar />
      <StatusBar />
      <HostTaskbar />
    </div>
  );
}
